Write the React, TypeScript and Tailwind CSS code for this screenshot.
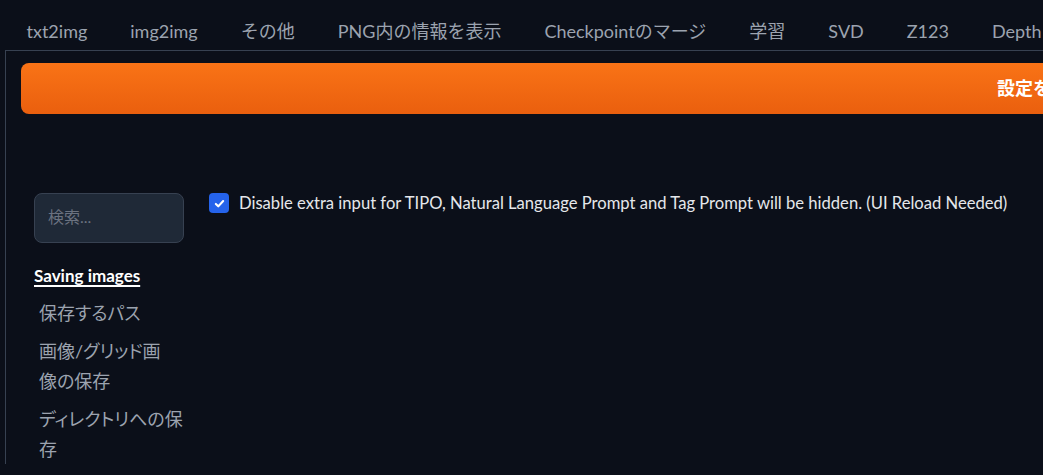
import React from 'react'

const tabs = ['txt2img', 'img2img', 'その他', 'PNG内の情報を表示', 'Checkpointのマージ', '学習', 'SVD', 'Z123', 'Depth']

// sidebar entries, wrapped where the narrow column breaks them
const sections = [['保存するパス'], ['画像/グリッド画', '像の保存'], ['ディレクトリへの保', '存']]

const font = "font-['Lato','Noto_Sans_CJK_JP',sans-serif]"

export default function App() {
  return (
    <div className={`h-[475px] w-[1043px] overflow-hidden bg-[#0b0f19] ${font}`}>
      {/* tab bar */}
      <div className="flex h-[50px] items-end whitespace-nowrap pl-[5px]">
        {tabs.map((t) => (
          <div key={t} className="px-[21.5px] pb-[5px] text-[18px] text-[#9ca3af]">
            {t}
          </div>
        ))}
      </div>

      <div className="ml-[5px] border-l border-t border-[#374151] px-[15px] pt-[12px]">
        <button
          type="button"
          className="flex h-[51px] w-[2042px] shrink-0 items-center justify-center rounded-lg bg-gradient-to-b from-[#f97316] to-[#ea5f0e] text-[18px] font-bold text-white"
        >
          設定を適用
        </button>

        <div className="mt-[79px] flex gap-[25px] pl-[13px]">
          {/* sidebar */}
          <div className="flex w-[150px] shrink-0 flex-col">
            <div className="flex h-[50px] items-center rounded-lg border border-[#374151] bg-[#1f2937] px-[13px] pb-[2px] text-[16px] text-[#6b7280]">
              検索...
            </div>
            <div className="mt-[20px] text-[17px] font-bold text-white underline decoration-[1.5px] underline-offset-[3px]">Saving images</div>
            <div className="mt-[9px] flex flex-col gap-[8px] pl-[5px]">
              {sections.map((lines) => (
                <div key={lines.join('')} className="whitespace-nowrap text-[18px] leading-[30px] text-[#9ca3af] [font-feature-settings:'palt']">
                  {lines.map((l, i) => (
                    <div key={i}>{l}</div>
                  ))}
                </div>
              ))}
            </div>
          </div>

          {/* content */}
          <div className="flex items-start gap-[10px]">
            <span className="flex size-[20px] shrink-0 items-center justify-center rounded-[4px] bg-[#2563eb]">
              <svg viewBox="0 0 16 16" className="size-[13px]" fill="none" stroke="white" strokeWidth="2.6" strokeLinecap="round" strokeLinejoin="round">
                <path d="M3.5 8.5l3 3 6-6.5" />
              </svg>
            </span>
            <span className="text-[16.6px] leading-[20px] text-[#e5e7eb] whitespace-nowrap">
              Disable extra input for TIPO, Natural Language Prompt and Tag Prompt will be hidden. (UI Reload Needed)
            </span>
          </div>
        </div>
      </div>
    </div>
  )
}
